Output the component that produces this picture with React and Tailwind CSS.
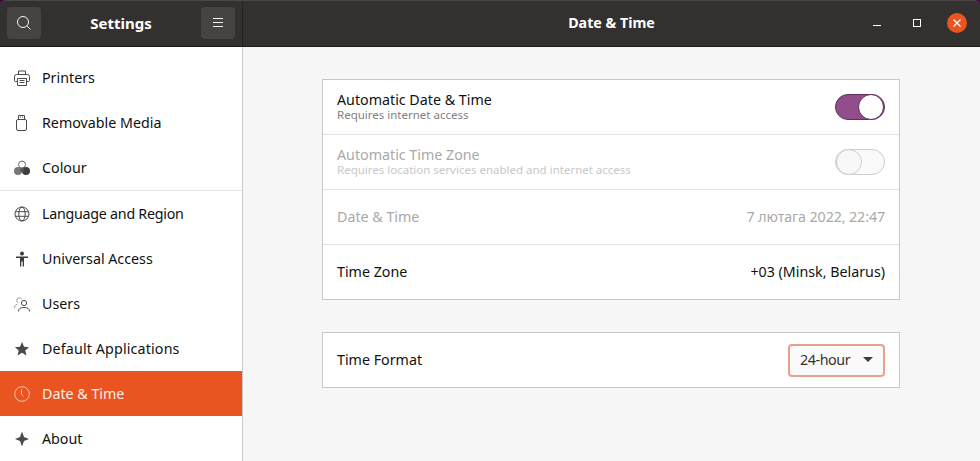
import React from 'react';

const Printer = () => (
  <svg width="16" height="16" viewBox="0 0 16 16" fill="none" stroke="#4a4a4a" strokeWidth="1">
    <path d="M4.500 4.500v-3.500h7v3.500" />
    <path d="M3.500 11.500h-2a1 1 0 0 1-1-1v-4a2 2 0 0 1 2-2h11a2 2 0 0 1 2 2v4a1 1 0 0 1-1 1h-2" />
    <path d="M3.500 8.500h9v7h-9z" />
    <path d="M5.500 10.500h5M5.500 12.500h5" />
  </svg>
);

const Usb = () => (
  <svg width="16" height="16" viewBox="0 0 16 16" fill="none" stroke="#4a4a4a" strokeWidth="1">
    <path d="M4.500 4V.5h6V4" />
    <path d="M6 2h1M8 2h1" />
    <rect x="2.500" y="4.500" width="10" height="11" rx="1.500" />
  </svg>
);

const Colour = () => (
  <svg width="16" height="16" viewBox="0 0 16 16">
    <circle cx="8" cy="4.500" r="3.500" fill="#fff" stroke="#6a6a6a" />
    <circle cx="4" cy="11" r="4" fill="#777" />
    <circle cx="12" cy="11" r="4" fill="#3d3d3d" />
    <circle cx="8" cy="10" r="2" fill="#555" />
  </svg>
);

const Globe = () => (
  <svg width="16" height="16" viewBox="0 0 16 16" fill="none" stroke="#4a4a4a" strokeWidth="1">
    <circle cx="8" cy="8" r="7" />
    <ellipse cx="8" cy="8" rx="3.200" ry="7" />
    <path d="M1.300 5.700h13.400M1.300 10.300h13.400" />
  </svg>
);

const Access = () => (
  <svg width="16" height="16" viewBox="0 0 16 16" fill="#3d3d3d">
    <circle cx="8" cy="2.500" r="2" />
    <path d="M2 5.500h12v1.500h-4v8.500h-1.300v-5h-1.400v5h-1.300v-8.500h-4z" />
  </svg>
);

const Users = () => (
  <svg width="16" height="16" viewBox="0 0 16 16" fill="none" stroke="#4a4a4a" strokeWidth="1">
    <circle cx="10" cy="7" r="2.600" />
    <path d="M4.500 15.500c0-3 2-4 5.500-4s5.500 1 5.500 4" />
    <path stroke="#9a9a9a" d="M7.700 3.200a2.700 2.700 0 0 0-5 1c0 1 .5 2 1.300 2.500M.5 12c0-2.500 1.500-3.500 3-3.800" />
  </svg>
);

const Star = () => (
  <svg width="16" height="16" viewBox="0 0 16 16" fill="#4a4a4a">
    <path d="M8 1l2.100 4.700 5 .5-3.800 3.300 1.200 5L8 11.800l-4.500 2.700 1.200-5L.9 6.200l5-.5z" />
  </svg>
);

const Clock = () => (
  <svg width="16" height="16" viewBox="0 0 16 16" fill="none" stroke="#f7c4ae" strokeWidth="1">
    <circle cx="8" cy="8" r="7.300" />
    <path d="M7.500 3.500v4.700l2 2.300" />
  </svg>
);

const Sparkle = () => (
  <svg width="16" height="16" viewBox="0 0 16 16" fill="#4a4a4a">
    <path d="M8 .5L10 6l5 2-5 2-2 5.500L6 10 1 8l5-2z" />
  </svg>
);

const NAV_ITEMS = [
  { label: 'Printers', icon: Printer },
  { label: 'Removable Media', icon: Usb },
  { label: 'Colour', icon: Colour, separator: true },
  { label: 'Language and Region', icon: Globe, tracking: 'tracking-[-0.25px]' },
  { label: 'Universal Access', icon: Access },
  { label: 'Users', icon: Users },
  { label: 'Default Applications', icon: Star, tracking: 'tracking-[0.15px]' },
  { label: 'Date & Time', icon: Clock, active: true },
  { label: 'About', icon: Sparkle },
];

function NavRow({ item }) {
  const Icon = item.icon;
  return (
    <div
      className={`flex h-[45px] shrink-0 items-center gap-[12px] pl-[14px] text-[14.25px] ${
        item.active ? 'bg-[#e95420] text-[#fdeee8]' : 'text-[#111111]'
      }`}
    >
      <Icon />
      <span className={item.tracking}>{item.label}</span>
    </div>
  );
}

function Toggle({ on }) {
  return (
    <div
      className={`flex h-[26px] w-[50px] items-center rounded-full border ${
        on ? 'justify-end border-[#5e2e5f] bg-[#924d8b]' : 'justify-start border-[#cdcdcd] bg-[#fafafa]'
      }`}
    >
      <div
        className={`h-[26px] w-[26px] rounded-full border ${
          on ? 'border-[#5e2e5f] bg-white' : 'border-[#cdcdcd] bg-[#f8f8f8]'
        }`}
      />
    </div>
  );
}

function Row({ children, last }) {
  return (
    <div
      className={`flex items-center justify-between px-[14px] ${
        last ? 'h-[54px]' : 'h-[55px] border-b border-[#e2e2e2]'
      }`}
    >
      {children}
    </div>
  );
}

export default function App() {
  return (
    <div className="h-[461px] w-[980px] overflow-hidden bg-[#3c1036] font-['Noto_Sans',sans-serif]">
      <header className="flex h-[47px] rounded-t-[6px] border-b border-t border-b-[#1c1b1a] border-t-[#4a4846] bg-[#333130] text-white">
        <div className="flex w-[243px] shrink-0 items-center justify-between border-r border-[#242322] px-[7px] pb-[1px]">
          <button className="flex h-[32px] w-[34px] items-center justify-center rounded-[4px] bg-[#454442]">
            <svg width="16" height="16" viewBox="0 0 16 16" fill="none" stroke="#f2f2f2" strokeWidth="1">
              <circle cx="7" cy="7" r="5.500" />
              <path d="M11 11l3.500 3.500" />
            </svg>
          </button>
          <span className="text-[15px] font-bold">Settings</span>
          <button className="flex h-[32px] w-[34px] items-center justify-center rounded-[4px] bg-[#454442]">
            <svg width="16" height="16" viewBox="0 0 16 16" stroke="#f2f2f2" strokeWidth="1">
              <path d="M3 3.500h10M3 7.500h10M3 11.500h10" />
            </svg>
          </button>
        </div>
        <div className="relative flex flex-1 items-center justify-center pb-[1px]">
          <span className="text-[14.25px] font-bold">Date &amp; Time</span>
          <div className="absolute right-[13px] top-[12px] flex items-center">
            <span className="mt-[4px] h-px w-[8px] bg-white" />
            <span className="ml-[32px] h-[8px] w-[8px] border border-white" />
            <button className="ml-[26px] flex h-[20px] w-[20px] items-center justify-center rounded-full bg-[#e95420]">
              <svg width="10" height="10" viewBox="0 0 10 10" stroke="#fff" strokeWidth="1.300">
                <path d="M1.500 1.500l7 7M8.500 1.500l-7 7" />
              </svg>
            </button>
          </div>
        </div>
      </header>

      <div className="flex h-[414px] bg-[#f6f6f6]">
        <aside className="flex w-[243px] shrink-0 flex-col border-r border-[#c9c9c9] bg-white pt-[8px]">
          {NAV_ITEMS.map((item) => (
            <React.Fragment key={item.label}>
              <NavRow item={item} />
              {item.separator && <div className="h-px shrink-0 bg-[#e2e2e2]" />}
            </React.Fragment>
          ))}
        </aside>

        <main className="flex-1 pl-[79px] pr-[80px] pt-[32px]">
          <div className="w-[578px] border border-[#c8c8c8] bg-white">
            <Row>
              <div className="flex flex-col">
                <span className="text-[14.25px] leading-[15px] text-[#111111]">Automatic Date &amp; Time</span>
                <span className="text-[11.5px] leading-[15px] text-[#7f7f7f]">Requires internet access</span>
              </div>
              <Toggle on />
            </Row>
            <Row>
              <div className="flex flex-col">
                <span className="text-[14.25px] leading-[15px] text-[#a9a9a9]">Automatic Time Zone</span>
                <span className="text-[11.5px] leading-[15px] text-[#c6cac6]">
                  Requires location services enabled and internet access
                </span>
              </div>
              <Toggle />
            </Row>
            <Row>
              <span className="text-[14.25px] text-[#a9a9a9]">Date &amp; Time</span>
              <span className="text-[14.25px] tracking-[-0.1px] text-[#a9a9a9]">7 лютага 2022, 22:47</span>
            </Row>
            <Row last>
              <span className="text-[14.25px] text-[#111111]">Time Zone</span>
              <span className="text-[14.25px] text-[#111111]">+03 (Minsk, Belarus)</span>
            </Row>
          </div>

          <div className="mt-[32px] flex h-[56px] w-[578px] items-center justify-between border border-[#c8c8c8] bg-white px-[14px]">
            <span className="text-[14.25px] text-[#111111]">Time Format</span>
            <button className="flex h-[33px] w-[97px] items-center justify-between rounded-[4px] border-2 border-[#e8a08a] bg-[#fafafa] px-[10px] text-[14.25px] text-[#333333]">
              <span className="tracking-[-0.4px]">24-hour</span>
              <svg width="10" height="6" viewBox="0 0 10 6" fill="#3d3d3d">
                <path d="M0 0h10L5 5z" />
              </svg>
            </button>
          </div>
        </main>
      </div>
    </div>
  );
}
